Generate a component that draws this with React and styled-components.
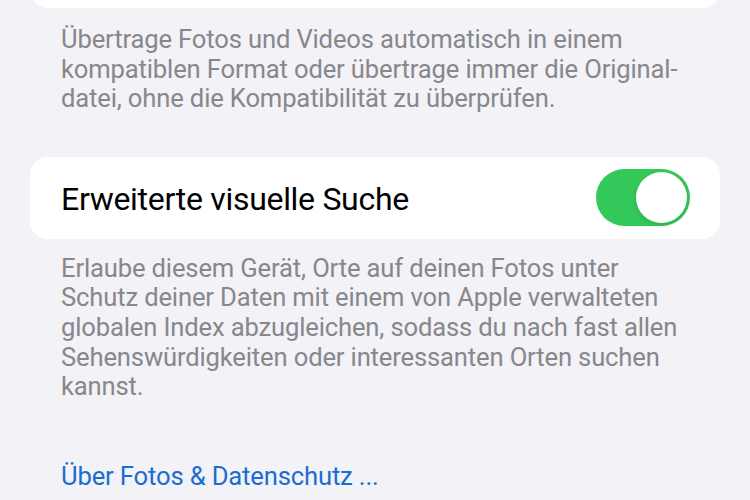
import React, { useState } from "react";
import styled, { createGlobalStyle } from "styled-components";

const GlobalStyle = createGlobalStyle`
  html, body {
    margin: 0;
    padding: 0;
    background: #f2f2f7;
  }
  body {
    font-family: Roboto, "Liberation Sans", sans-serif;
    -webkit-font-smoothing: antialiased;
  }
`;

const Page = styled.div`
  width: 750px;
  height: 500px;
  overflow: hidden;
  background: #f2f2f7;
  padding: 0 30px;
  box-sizing: border-box;
  display: flex;
  flex-direction: column;
`;

const Card = styled.div`
  background: #ffffff;
  border-radius: 18px;
  height: ${(props) => props.height || 82}px;
  margin-top: ${(props) => props.offset || 0}px;
  display: flex;
  align-items: center;
  justify-content: space-between;
  padding: 0 30px 0 31px;
  flex-shrink: 0;
`;

const Title = styled.div`
  font-size: 32px;
  color: #000;
  letter-spacing: -0.3px;
  margin-top: 3px;
`;

const Footnote = styled.p`
  margin: ${(props) => props.top}px 0 0 0;
  padding: 0 0 0 31px;
  font-size: 25.6px;
  line-height: 29.6px;
  color: #87878c;
  letter-spacing: -0.15px;
  white-space: nowrap;
`;

const Link = styled.a`
  margin: ${(props) => props.top}px 0 0 31px;
  font-size: 25.6px;
  line-height: 30px;
  color: #1a6dd2;
  text-decoration: none;
  letter-spacing: -0.15px;
`;

const Track = styled.button`
  width: 94px;
  height: 57px;
  border-radius: 29px;
  border: none;
  padding: 3px;
  background: ${(props) => (props.on ? "#34c759" : "#e9e9eb")};
  display: flex;
  justify-content: ${(props) => (props.on ? "flex-end" : "flex-start")};
  align-items: center;
  cursor: pointer;
  box-sizing: border-box;
`;

const Knob = styled.span`
  width: 51px;
  height: 51px;
  border-radius: 50%;
  background: #fff;
  box-shadow: 0 2px 4px rgba(0, 0, 0, 0.12);
`;

const Toggle = () => {
  const [on, setOn] = useState(true);
  return (
    <Track on={on ? 1 : 0} onClick={() => setOn(!on)}>
      <Knob />
    </Track>
  );
};

export default function App() {
  return (
    <>
      <GlobalStyle />
      <Page>
        <Card height={60} offset={-52} />
        <Footnote top={17}>
          Übertrage Fotos und Videos automatisch in einem
          <br />
          kompatiblen Format oder übertrage immer die Original-
          <br />
          datei, ohne die Kompatibilität zu überprüfen.
        </Footnote>
        <Card offset={43}>
          <Title>Erweiterte visuelle Suche</Title>
          <Toggle />
        </Card>
        <Footnote top={15}>
          Erlaube diesem Gerät, Orte auf deinen Fotos unter
          <br />
          Schutz deiner Daten mit einem von Apple verwalteten
          <br />
          globalen Index abzugleichen, sodass du nach fast allen
          <br />
          Sehenswürdigkeiten oder interessanten Orten suchen
          <br />
          kannst.
        </Footnote>
        <Link top={59}>Über Fotos &amp; Datenschutz ...</Link>
      </Page>
    </>
  );
}
